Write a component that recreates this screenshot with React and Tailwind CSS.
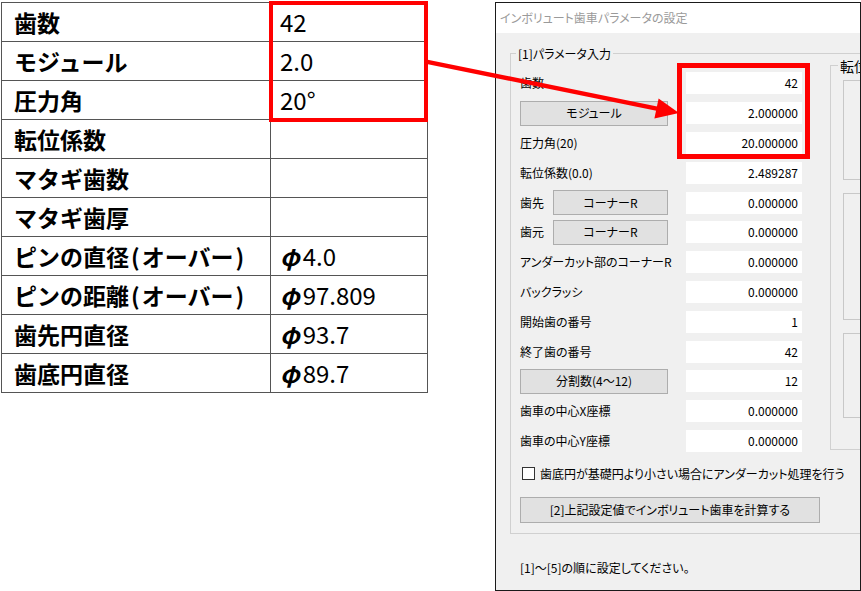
import React from "react";

const tableRows = [
  ["歯数", "42"],
  ["モジュール", "2.0"],
  ["圧力角", "20°"],
  ["転位係数", ""],
  ["マタギ歯数", ""],
  ["マタギ歯厚", ""],
  ["ピンの直径(オーバー)", "φ4.0"],
  ["ピンの距離(オーバー)", "φ97.809"],
  ["歯先円直径", "φ93.7"],
  ["歯底円直径", "φ89.7"],
];

function Label({ text }) {
  const parts = text.split(/([()])/);
  return (
    <>
      {parts.map((p, i) =>
        p === "(" || p === ")" ? (
          <span key={i} className="mx-[2px]">
            {p}
          </span>
        ) : (
          <span key={i}>{p}</span>
        )
      )}
    </>
  );
}

function SpecTable() {
  return (
    <div className="ml-[1px] mt-[2px] w-[427px] self-start border-l border-t border-[#555] font-['Noto_Sans_CJK_JP',sans-serif] text-black">
      {tableRows.map(([label, value], i) => (
        <div key={i} className="flex h-[39px]">
          <div className="flex w-[269px] items-center whitespace-nowrap border-b border-r border-[#555] pl-[12px] text-[23px] font-bold leading-none">
            <Label text={label} />
          </div>
          <div className="flex w-[157px] items-center border-b border-r border-[#555] pl-[9px] text-[24px] font-normal leading-none">
            {value.startsWith("φ") ? (
              <>
                <span className="mr-[3px] font-semibold italic">φ</span>
                <span>{value.slice(1)}</span>
              </>
            ) : (
              value
            )}
          </div>
        </div>
      ))}
    </div>
  );
}

function Btn({ children, className = "" }) {
  return (
    <div
      className={
        "flex h-[25px] items-center justify-center border border-[#adadad] bg-[#e1e1e1] " +
        className
      }
    >
      {children}
    </div>
  );
}

function Field({ value }) {
  return (
    <div className="flex h-[22px] w-[116px] items-center justify-end bg-white pr-[4px]">
      {value}
    </div>
  );
}

function Row({ left, value }) {
  return (
    <div className="flex h-[29.8px] items-center">
      <div className="flex w-[166px] items-center">{left}</div>
      <Field value={value} />
    </div>
  );
}

function Dialog() {
  return (
    <div className="ml-[67px] mt-[2px] flex h-[589px] w-[366px] flex-col overflow-hidden border border-[#1a1a1a] font-['Noto_Sans_CJK_JP',sans-serif] text-[12px] leading-none text-black [font-feature-settings:'palt']">
      <div className="flex h-[30px] shrink-0 items-center bg-white pl-[4px] text-[12px] text-[#9a9a9a]">
        インボリュート歯車パラメータの設定
      </div>
      <div className="flex flex-1 flex-col bg-[#f0f0f0] pl-[14px] pt-[20px]">
        <div className="relative w-[420px] border border-[#d0d0d0] pb-[10px] pl-[9px] pt-[11px]">
          <span className="absolute -top-[8px] left-[5px] bg-[#f0f0f0] px-[2px] leading-[16px]">
            [1]パラメータ入力
          </span>
          <div className="flex">
            <div className="flex w-[292px] flex-col pt-[3.6px]">
              <Row left={<span>歯数</span>} value="42" />
              <Row left={<Btn className="w-[148px]">モジュール</Btn>} value="2.000000" />
              <Row left={<span>圧力角(20)</span>} value="20.000000" />
              <Row left={<span>転位係数(0.0)</span>} value="2.489287" />
              <Row
                left={
                  <>
                    <span className="w-[33px]">歯先</span>
                    <Btn className="w-[115px]">コーナーR</Btn>
                  </>
                }
                value="0.000000"
              />
              <Row
                left={
                  <>
                    <span className="w-[33px]">歯元</span>
                    <Btn className="w-[115px]">コーナーR</Btn>
                  </>
                }
                value="0.000000"
              />
              <Row left={<span>アンダーカット部のコーナーR</span>} value="0.000000" />
              <Row left={<span>バックラッシ</span>} value="0.000000" />
              <Row left={<span>開始歯の番号</span>} value="1" />
              <Row left={<span>終了歯の番号</span>} value="42" />
              <Row left={<Btn className="w-[148px]">分割数(4〜12)</Btn>} value="12" />
              <Row left={<span>歯車の中心X座標</span>} value="0.000000" />
              <Row left={<span>歯車の中心Y座標</span>} value="0.000000" />
            </div>
            <div className="relative ml-[21px] h-[385px] w-[100px] border border-[#d0d0d0] pl-[12px] pt-[14px]">
              <span className="absolute -top-[9px] left-[7px] bg-[#f0f0f0] px-[2px] text-[14px] leading-[18px]">
                転位係数
              </span>
              <div className="flex flex-col gap-[13px]">
                <div className="h-[100px] border border-[#c8c8c8]" />
                <div className="h-[127px] border border-[#c8c8c8]" />
                <div className="h-[85px] border border-[#c8c8c8]" />
              </div>
            </div>
          </div>
          <div className="mt-[10px] flex h-[16px] items-center pl-[2px]">
            <div className="h-[13px] w-[13px] border border-[#333] bg-white" />
            <span className="ml-[5px] whitespace-nowrap">
              歯底円が基礎円より小さい場合にアンダーカット処理を行う
            </span>
          </div>
          <Btn className="mt-[15px] h-[26px] w-[300px]">
            [2]上記設定値でインボリュート歯車を計算する
          </Btn>
        </div>
        <div className="mt-[28px] pl-[10px]">[1]〜[5]の順に設定してください。</div>
      </div>
    </div>
  );
}

export default function App() {
  return (
    <div className="relative h-[591px] w-[861px] overflow-hidden bg-white">
      <div className="flex">
        <SpecTable />
        <Dialog />
      </div>
      <div className="pointer-events-none absolute left-[269px] top-[1px] h-[121px] w-[159px] border-4 border-[#ff0000]" />
      <div className="pointer-events-none absolute left-[677px] top-[63px] h-[96px] w-[133px] border-[5px] border-[#ff0000]" />
      <svg
        className="pointer-events-none absolute left-0 top-0"
        width="861"
        height="591"
        viewBox="0 0 861 591"
      >
        <line x1="426" y1="61.6" x2="658" y2="108.9" stroke="#ff0000" strokeWidth="4.5" />
        <polygon points="679,113 654.4,118.6 658.6,98.6" fill="#ff0000" />
      </svg>
    </div>
  );
}
